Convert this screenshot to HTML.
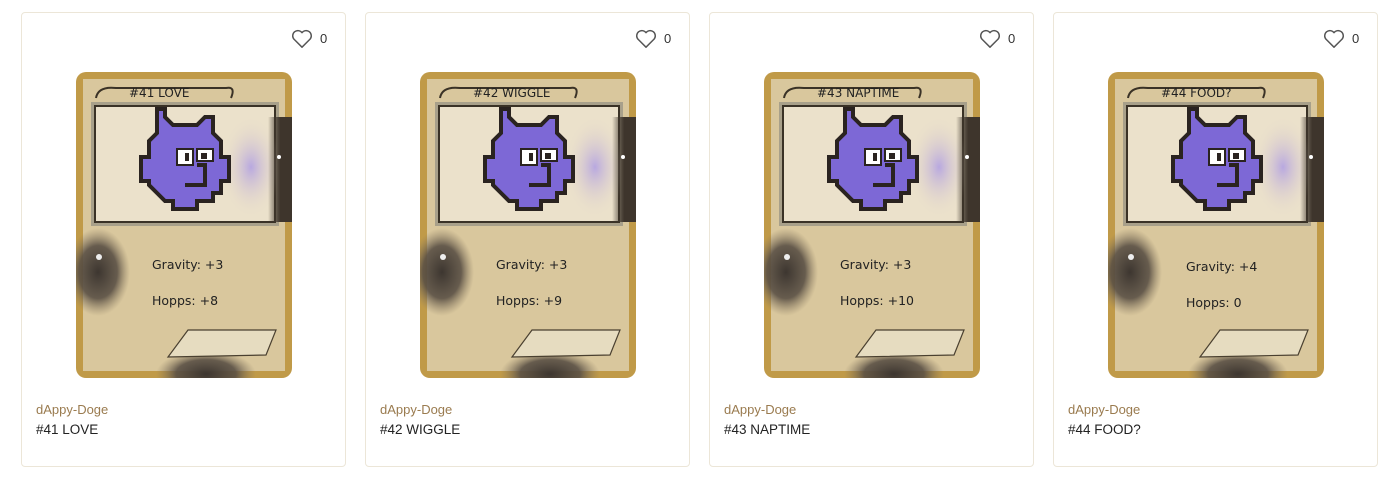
<!DOCTYPE html>
<html><head><meta charset="utf-8"><style>
body{margin:0;background:#fff;width:1400px;height:479px;overflow:hidden;font-family:"Liberation Sans",sans-serif}
.card{position:absolute;top:12px;width:325px;height:455px;border:1px solid #ece6d8;border-radius:4px;box-sizing:border-box}
.likes{position:absolute;top:16px;left:269px;font-size:13px;color:#333}
.likes svg{position:absolute;left:0;top:0}
.likes span{position:absolute;left:29px;top:2px}
.art{position:absolute;left:54px;top:59px}
.col{position:absolute;left:14px;top:389px;font-size:13px;color:#9a7b4f}
.nm{position:absolute;left:14px;top:409px;font-size:13.5px;color:#222}
</style></head><body>
<svg width="0" height="0" style="position:absolute">
<defs>
<radialGradient id="dk" cx=".5" cy=".5" r=".5"><stop offset="0" stop-color="#3d3630"/><stop offset=".6" stop-color="#5a5045" stop-opacity=".9"/><stop offset="1" stop-color="#8a7b62" stop-opacity="0"/></radialGradient>
<radialGradient id="bl" cx=".5" cy=".5" r=".5"><stop offset="0" stop-color="#b8a8e0"/><stop offset="1" stop-color="#e8dcc6" stop-opacity="0"/></radialGradient>
<linearGradient id="rd" x1="0" x2="1"><stop offset="0" stop-color="#3e352c" stop-opacity="0"/><stop offset=".5" stop-color="#3e352c"/><stop offset="1" stop-color="#3e352c"/></linearGradient>
<g id="base">
<rect x="0" y="0" width="216" height="306" rx="10" fill="#c09a48"/>
<rect x="7" y="7" width="202" height="292" fill="#d9c79d"/>
<ellipse cx="22" cy="200" rx="32" ry="44" fill="url(#dk)"/>
<ellipse cx="130" cy="302" rx="50" ry="24" fill="url(#dk)"/>
<path d="M20 26 Q22 14 40 16 L85 16 L150 16 Q160 14 155 26" fill="none" stroke="#3a3226" stroke-width="2"/>
<rect x="15" y="30" width="188" height="124" fill="#a8a08a"/>
<rect x="19" y="34" width="180" height="116" fill="#ebe1cb" stroke="#3a3226" stroke-width="2"/>
<ellipse cx="175" cy="95" rx="30" ry="50" fill="url(#bl)"/>
<rect x="192" y="45" width="24" height="105" fill="url(#rd)"/>
<circle cx="203" cy="85" r="2" fill="#fff"/>
<circle cx="23" cy="185" r="3" fill="#eee"/>
<path d="M112 258 L200 258 L190 283 L92 285 Z" fill="#e6dcc0" stroke="#4a4030" stroke-width="1.2"/>
<g transform="translate(65,37) scale(4)">
<path d="M4 0H6V2L8 4H14L16 2H18V6L20 8V12H22V18H20V21H18V23H14V25H8V23H6L4 21L2 19V18H0V12H2V8L4 6Z" fill="#7d68d6" stroke="#2a2320" stroke-width="1"/>
<rect x="9" y="10" width="4" height="4" fill="#fff" stroke="#2a2320" stroke-width=".5"/>
<rect x="14" y="10" width="4" height="3" fill="#fff" stroke="#2a2320" stroke-width=".5"/>
<rect x="11" y="11" width="1" height="2" fill="#2a2320"/><rect x="15" y="11" width="1.5" height="1.5" fill="#2a2320"/>
<path d="M14 14H16V19H11" fill="none" stroke="#2a2320" stroke-width="1"/>
</g>
</g>
</defs></svg>

<div class="card" style="left:21px">
<div class="likes"><svg width="22" height="20" viewBox="0 0 24 22"><path d="M12 20 L3 11 A5 5 0 0 1 12 4 A5 5 0 0 1 21 11 Z" fill="none" stroke="#555" stroke-width="1.6" stroke-linejoin="round"/></svg><span>0</span></div>
<svg class="art" width="216" height="306"><use href="#base"/><text x="53" y="25" font-family="DejaVu Sans" font-size="12" fill="#222">#41 LOVE</text><text x="76" y="197" font-family="DejaVu Sans" font-size="12.5" fill="#222">Gravity: +3</text><text x="76" y="233" font-family="DejaVu Sans" font-size="12.5" fill="#222">Hopps: +8</text></svg>
<div class="col">dAppy-Doge</div><div class="nm">#41 LOVE</div></div>

<div class="card" style="left:365px">
<div class="likes"><svg width="22" height="20" viewBox="0 0 24 22"><path d="M12 20 L3 11 A5 5 0 0 1 12 4 A5 5 0 0 1 21 11 Z" fill="none" stroke="#555" stroke-width="1.6" stroke-linejoin="round"/></svg><span>0</span></div>
<svg class="art" width="216" height="306"><use href="#base"/><text x="53" y="25" font-family="DejaVu Sans" font-size="12" fill="#222">#42 WIGGLE</text><text x="76" y="197" font-family="DejaVu Sans" font-size="12.5" fill="#222">Gravity: +3</text><text x="76" y="233" font-family="DejaVu Sans" font-size="12.5" fill="#222">Hopps: +9</text></svg>
<div class="col">dAppy-Doge</div><div class="nm">#42 WIGGLE</div></div>

<div class="card" style="left:709px">
<div class="likes"><svg width="22" height="20" viewBox="0 0 24 22"><path d="M12 20 L3 11 A5 5 0 0 1 12 4 A5 5 0 0 1 21 11 Z" fill="none" stroke="#555" stroke-width="1.6" stroke-linejoin="round"/></svg><span>0</span></div>
<svg class="art" width="216" height="306"><use href="#base"/><text x="53" y="25" font-family="DejaVu Sans" font-size="12" fill="#222">#43 NAPTIME</text><text x="76" y="197" font-family="DejaVu Sans" font-size="12.5" fill="#222">Gravity: +3</text><text x="76" y="233" font-family="DejaVu Sans" font-size="12.5" fill="#222">Hopps: +10</text></svg>
<div class="col">dAppy-Doge</div><div class="nm">#43 NAPTIME</div></div>

<div class="card" style="left:1053px">
<div class="likes"><svg width="22" height="20" viewBox="0 0 24 22"><path d="M12 20 L3 11 A5 5 0 0 1 12 4 A5 5 0 0 1 21 11 Z" fill="none" stroke="#555" stroke-width="1.6" stroke-linejoin="round"/></svg><span>0</span></div>
<svg class="art" width="216" height="306"><use href="#base"/><text x="53" y="25" font-family="DejaVu Sans" font-size="12" fill="#222">#44 FOOD?</text><text x="78" y="199" font-family="DejaVu Sans" font-size="12.5" fill="#222">Gravity: +4</text><text x="78" y="235" font-family="DejaVu Sans" font-size="12.5" fill="#222">Hopps: 0</text></svg>
<div class="col">dAppy-Doge</div><div class="nm">#44 FOOD?</div></div>
</body></html>
